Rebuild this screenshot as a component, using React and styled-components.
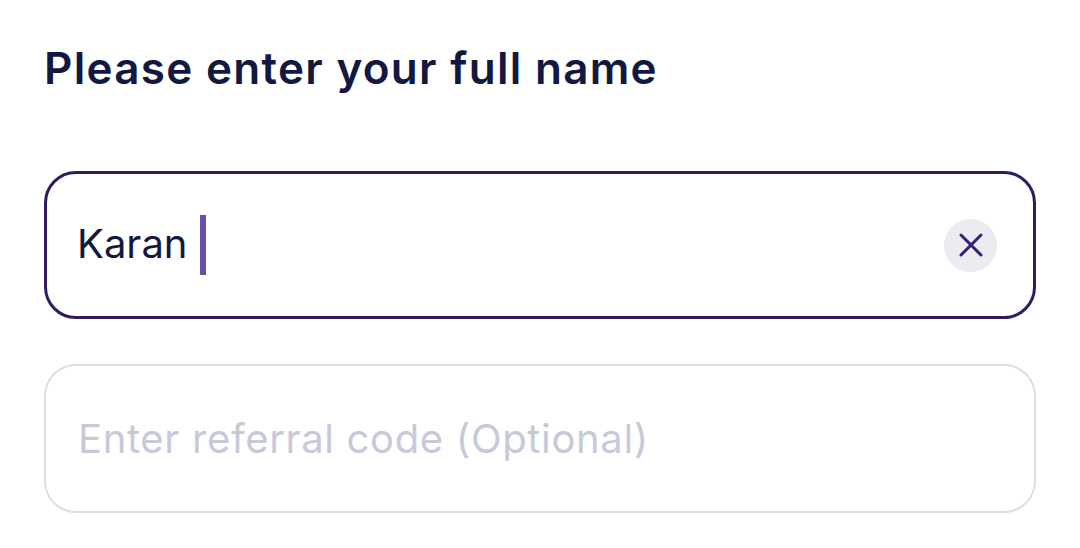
import React from 'react'
import styled, { createGlobalStyle } from 'styled-components'

const GlobalStyle = createGlobalStyle`
  html, body {
    margin: 0;
    padding: 0;
    background: #ffffff;
  }
`

const Page = styled.div`
  width: 1080px;
  height: 548px;
  box-sizing: border-box;
  padding: 40px 44px 0 44px;
  font-family: 'Inter', 'Noto Sans', sans-serif;
  overflow: hidden;
`

const Title = styled.h1`
  margin: 0 0 74px 0;
  height: 57px;
  line-height: 57px;
  font-size: 44px;
  font-weight: 600;
  letter-spacing: 1.3px;
  color: #12183f;
`

const Fields = styled.div`
  display: flex;
  flex-direction: column;
  gap: 45px;
`

const Field = styled.div`
  width: 992px;
  height: ${p => (p.$active ? '148px' : '149px')};
  box-sizing: border-box;
  display: flex;
  align-items: center;
  padding: 0 36px 0 ${p => (p.$active ? '30px' : '32px')};
  border-radius: 32px;
  border: ${p => (p.$active ? '3px solid #2f1a63' : '2px solid #dcdee5')};
`

const Value = styled.span`
  margin-bottom: 3px;
  font-size: 40px;
  color: #12183f;
`

const Placeholder = styled.span`
  font-size: 40px;
  letter-spacing: 0.65px;
  color: #c6c9da;
`

const Caret = styled.span`
  width: 6px;
  height: 60px;
  margin-left: 12px;
  background: #6a4fa3;
`

const ClearButton = styled.div`
  width: 53px;
  height: 53px;
  margin-left: auto;
  border-radius: 50%;
  background: #ebebf1;
  color: #3a1f78;
  display: flex;
  align-items: center;
  justify-content: center;
`

export default function App() {
  return (
    <>
      <GlobalStyle />
      <Page>
        <Title>Please enter your full name</Title>
        <Fields>
          <Field $active>
            <Value>Karan</Value>
            <Caret />
            <ClearButton>
              <svg width="24" height="24" viewBox="0 0 24 24" fill="none" stroke="currentColor" strokeWidth="3" strokeLinecap="round">
                <path d="M2 2 L22 22 M22 2 L2 22" />
              </svg>
            </ClearButton>
          </Field>
          <Field>
            <Placeholder>Enter referral code (Optional)</Placeholder>
          </Field>
        </Fields>
      </Page>
    </>
  )
}
